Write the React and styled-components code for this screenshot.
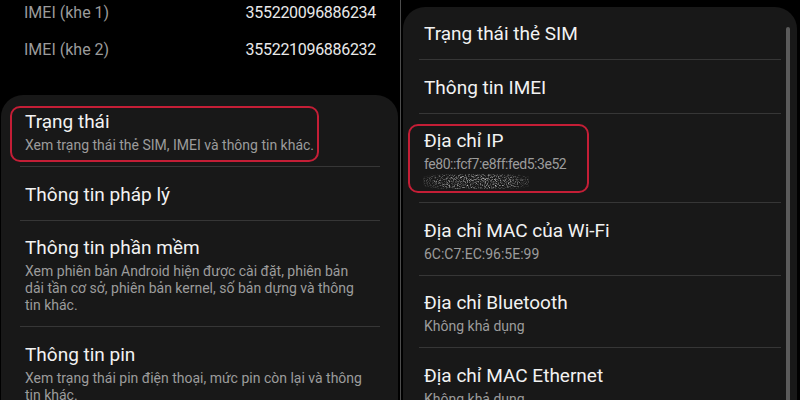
import React from "react";
import styled, { createGlobalStyle } from "styled-components";

const imeiRows = [
  { label: "IMEI (khe 1)", value: "355220096886234" },
  { label: "IMEI (khe 2)", value: "355221096886232" },
];

const aboutItems = [
  {
    title: "Trạng thái",
    lines: ["Xem trạng thái thẻ SIM, IMEI và thông tin khác."],
    mark: { left: -10, top: 11, width: 309, height: 56 },
  },
  { title: "Thông tin pháp lý" },
  {
    title: "Thông tin phần mềm",
    lines: [
      "Xem phiên bản Android hiện được cài đặt, phiên bản",
      "dải tần cơ sở, phiên bản kernel, số bản dựng và thông",
      "tin khác.",
    ],
  },
  {
    title: "Thông tin pin",
    lines: [
      "Xem trạng thái pin điện thoại, mức pin còn lại và thông",
      "tin khác.",
    ],
  },
];

const statusItems = [
  { title: "Trạng thái thẻ SIM" },
  { title: "Thông tin IMEI" },
  {
    title: "Địa chỉ IP",
    lines: ["fe80::fcf7:e8ff:fed5:3e52"],
    tight: true,
    hidden: true,
    mark: { left: -11, top: 10, width: 181, height: 69 },
  },
  { title: "Địa chỉ MAC của Wi-Fi", lines: ["6C:C7:EC:96:5E:99"] },
  { title: "Địa chỉ Bluetooth", lines: ["Không khả dụng"] },
  { title: "Địa chỉ MAC Ethernet", lines: ["Không khả dụng"] },
];

// blurred-out second address line
const Noise = () => (
  <NoiseSvg width="106" height="17" viewBox="0 0 106 17">
    <defs>
      <filter id="speckle" x="0" y="0" width="100%" height="100%">
        <feTurbulence
          type="fractalNoise"
          baseFrequency="0.9"
          numOctaves="2"
          seed="11"
        />
        <feColorMatrix
          type="matrix"
          values="0 0 0 0 0.62  0 0 0 0 0.62  0 0 0 0 0.62  2.3 0 0 0 -1.02"
        />
        <feGaussianBlur stdDeviation="0.3" />
      </filter>
      <radialGradient id="fade" cx="0.5" cy="0.5" r="0.6">
        <stop offset="0.55" stopColor="#fff" />
        <stop offset="1" stopColor="#000" />
      </radialGradient>
      <mask id="fadeMask">
        <rect width="106" height="17" fill="url(#fade)" />
      </mask>
    </defs>
    <rect
      x="0"
      y="1"
      width="106"
      height="15"
      filter="url(#speckle)"
      mask="url(#fadeMask)"
    />
  </NoiseSvg>
);

const SettingRow = ({ item }) => (
  <Row>
    <Title>{item.title}</Title>
    {item.lines?.map((line) => (
      <Sub key={line} $tight={item.tight}>
        {line}
      </Sub>
    ))}
    {item.hidden && <Noise />}
    {item.mark && <Mark style={item.mark} />}
  </Row>
);

const App = () => {
  return (
    <>
      <GlobalStyle />
      <Screen>
        <Pane>
          <InfoList>
            {imeiRows.map((r) => (
              <InfoRow key={r.label}>
                <InfoLabel>{r.label}</InfoLabel>
                <InfoValue>{r.value}</InfoValue>
              </InfoRow>
            ))}
          </InfoList>
          <Card $inset="0 18px 0 19px">
            {aboutItems.map((item) => (
              <SettingRow key={item.title} item={item} />
            ))}
          </Card>
        </Pane>
        <Split />
        <Pane $right>
          <Card $inset="0 16px" $top="7px">
            <Scrollbar />
            {statusItems.map((item) => (
              <SettingRow key={item.title} item={item} />
            ))}
          </Card>
        </Pane>
      </Screen>
    </>
  );
};

const GlobalStyle = createGlobalStyle`
  html, body {
    margin: 0;
    background: #000;
  }
  body {
    font-family: Roboto, "Noto Sans", sans-serif;
  }
`;

const Screen = styled.div`
  display: flex;
  width: 800px;
  height: 400px;
  overflow: hidden;
  background: #000;
`;

const Pane = styled.div`
  display: flex;
  flex-direction: column;
  width: ${({ $right }) => ($right ? "399px" : "400px")};
  padding: ${({ $right }) => ($right ? "0 3px 0 2px" : "0 2px 0 1px")};
  box-sizing: border-box;
`;

const Split = styled.div`
  width: 1px;
  flex: none;
  background: #4d4d4d;
`;

const InfoList = styled.div`
  display: flex;
  flex-direction: column;
  margin: -6px 0 0;
  padding: 0 22px 0 23px;
  height: 101px;
  flex: none;
`;

const InfoRow = styled.div`
  display: flex;
  justify-content: space-between;
  align-items: center;
  height: 37px;
  font-size: 16px;
`;

const InfoLabel = styled.span`
  color: #9b9b9b;
`;

const InfoValue = styled.span`
  color: #e9e9e9;
  letter-spacing: -0.3px;
`;

const Card = styled.div`
  position: relative;
  flex: 1;
  margin-top: ${({ $top }) => $top || "0"};
  padding: ${({ $inset }) => $inset};
  background: #181818;
  border-radius: 22px 22px 0 0;
`;

const Row = styled.div`
  position: relative;
  padding: 14.3px 5px 12.2px;
  border-bottom: 1px solid #363636;

  &:last-child {
    border-bottom: none;
  }
`;

const Title = styled.div`
  font-size: 19px;
  line-height: 26px;
  color: #f2f2f2;
  white-space: nowrap;
`;

const Sub = styled.div`
  font-size: 14px;
  line-height: 17px;
  color: #9c9c9c;
  white-space: nowrap;
  letter-spacing: ${({ $tight }) => ($tight ? "-0.45px" : "0")};

  ${Title} + & {
    margin-top: 2px;
  }
`;

const NoiseSvg = styled.svg`
  display: block;
  margin-left: -1px;
  height: 17px;
`;

const Mark = styled.div`
  position: absolute;
  box-sizing: border-box;
  border: 2.5px solid #c41e36;
  border-radius: 10px;
  pointer-events: none;
`;

const Scrollbar = styled.div`
  position: absolute;
  top: 20px;
  bottom: 0;
  right: 7px;
  width: 4px;
  border-radius: 2px 2px 0 0;
  background: #5b5b5b;
`;

export default App;
